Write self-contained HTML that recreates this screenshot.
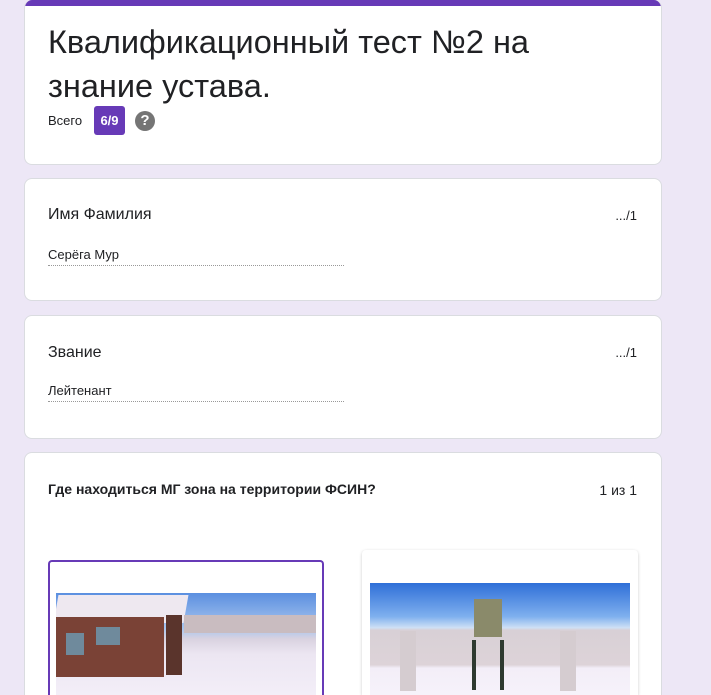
<!DOCTYPE html>
<html><head><meta charset="utf-8"><style>
html,body{margin:0;height:695px;overflow:hidden}
body{background:#ede7f6;width:711px;font-family:"Liberation Sans",Roboto,sans-serif;color:#202124}
#w{position:relative;width:711px;height:695px;overflow:hidden}
.card{position:absolute;left:24px;width:638px;background:#fff;border:1px solid #dadce0;border-radius:8px;box-sizing:border-box}
.abs{position:absolute}
</style></head><body><div id="w">
<div class="card" style="top:0;height:165px;border-top:none;overflow:hidden">
<div class="abs" style="left:0;top:0;width:100%;height:6px;background:#673ab7"></div>
<div class="abs" style="left:23px;top:20px;font-size:32.5px;line-height:44px;width:560px">Квалификационный тест №2 на знание устава.</div>
<div class="abs" style="left:23px;top:113px;font-size:13px">Всего</div>
<div class="abs" style="left:69px;top:106px;width:31px;height:29px;background:#673ab7;border-radius:3px;color:#fff;font-size:13px;font-weight:bold;text-align:center;line-height:29px">6/9</div>
<div class="abs" style="left:110px;top:111px;width:20px;height:20px;border-radius:50%;background:#757575;color:#fff;font-weight:bold;font-size:15px;text-align:center;line-height:20px">?</div>
</div>
<div class="card" style="top:178px;height:123px">
<div class="abs" style="left:23px;top:27px;font-size:16px">Имя Фамилия</div>
<div class="abs" style="right:24px;top:29px;font-size:13px">.../1</div>
<div class="abs" style="left:23px;top:68px;font-size:13px;width:296px;height:18px;border-bottom:1px dotted #999">Серёга Мур</div>
</div>
<div class="card" style="top:315px;height:124px">
<div class="abs" style="left:23px;top:28px;font-size:16px">Звание</div>
<div class="abs" style="right:24px;top:29px;font-size:13px">.../1</div>
<div class="abs" style="left:23px;top:67px;font-size:13px;width:296px;height:18px;border-bottom:1px dotted #999">Лейтенант</div>
</div>
<div class="card" style="top:452px;height:243px;border-bottom:none;border-radius:8px 8px 0 0">
<div class="abs" style="left:23px;top:28px;font-size:14px;font-weight:bold">Где находиться МГ зона на территории ФСИН?</div>
<div class="abs" style="right:24px;top:29px;font-size:14px">1 из 1</div>
</div>
<div class="abs" style="left:48px;top:560px;width:276px;height:135px;border:2px solid #673ab7;border-bottom:none;border-radius:4px 4px 0 0;box-sizing:border-box;background:#fff"></div>
<div class="abs" style="left:56px;top:593px;width:260px;height:102px;background:linear-gradient(#5b8fe0 0%,#a9c6ef 35%,#d9d2e0 45%,#ece6f2 60%,#f3eef8 100%);overflow:hidden">
<div class="abs" style="left:0;top:2px;width:130px;height:28px;background:#eee8f0;transform:skewX(-10deg)"></div>
<div class="abs" style="left:0;top:24px;width:108px;height:60px;background:#7a4236"></div>
<div class="abs" style="left:110px;top:22px;width:16px;height:60px;background:#5a342c"></div>
<div class="abs" style="left:10px;top:40px;width:18px;height:22px;background:#6f8a9c"></div>
<div class="abs" style="left:40px;top:34px;width:24px;height:18px;background:#6f8a9c"></div>
<div class="abs" style="left:128px;top:22px;width:132px;height:18px;background:#c9bcc0"></div>
</div>
<div class="abs" style="left:362px;top:550px;width:276px;height:145px;background:#fff;border-radius:4px 4px 0 0;box-shadow:0 1px 3px rgba(0,0,0,.2)"></div>
<div class="abs" style="left:370px;top:583px;width:260px;height:112px;background:linear-gradient(#2f6fd8 0%,#7fb0ee 30%,#cfe0f5 40%,#d8d0d6 42%,#ddd3d8 73%,#f3eef8 76%,#f6f2fa 100%);overflow:hidden">
<div class="abs" style="left:104px;top:16px;width:28px;height:38px;background:#8a8a6a"></div>
<div class="abs" style="left:102px;top:57px;width:4px;height:50px;background:#2e3a30"></div>
<div class="abs" style="left:130px;top:57px;width:4px;height:50px;background:#2e3a30"></div>
<div class="abs" style="left:30px;top:48px;width:16px;height:60px;background:#d5ccd0"></div>
<div class="abs" style="left:190px;top:48px;width:16px;height:60px;background:#d5ccd0"></div>
</div>
</div></body></html>
